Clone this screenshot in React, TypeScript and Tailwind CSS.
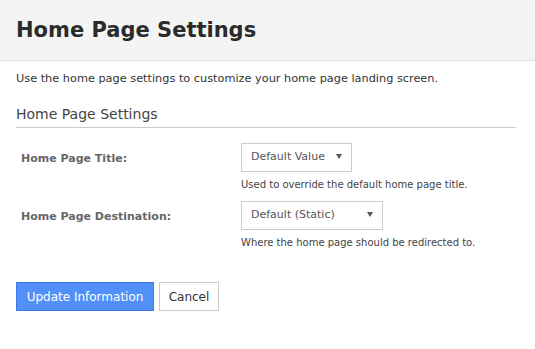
import React from "react";

const font = { fontFamily: '"DejaVu Sans", Verdana, sans-serif' };

const SelectBox: React.FC<{ value: string; width: string }> = ({ value, width }) => (
  <div
    className={`${width} h-[29px] border border-[#cccccc] bg-white flex items-center justify-between pl-[9px] pr-[9px] text-[11px] text-[#555]`}
  >
    <span>{value}</span>
    <svg width="6" height="5" viewBox="0 0 6 5" className="mb-[3px]">
      <path d="M0 0h6L3 5z" fill="#555" />
    </svg>
  </div>
);

export default function App() {
  return (
    <div className="w-[535px] h-[349px] bg-white text-[#333]" style={font}>
      {/* Header */}
      <div className="h-[61px] bg-[#f4f4f4] border-b border-[#e1e1e1] flex items-center px-4">
        <h1 className="text-[21px] font-bold text-[#2b2b2b] leading-none">
          Home Page Settings
        </h1>
      </div>

      <div className="px-4">
        <p className="text-[11.3px] mt-[11px] leading-[14px] text-[#333]">
          Use the home page settings to customize your home page landing screen.
        </p>

        <div className="mr-[3px] mt-[19px] border-b border-[#cccccc] pb-[4px]">
          <h2 className="text-[14px] text-[#444] leading-[18px]">Home Page Settings</h2>
        </div>

        <div className="mt-[15px] flex flex-col gap-[10px]">
          <div className="flex">
            <div className="w-[225px] pl-[5px] pt-[9px] text-[11px] leading-[14px] font-bold text-[#666]">
              Home Page Title:
            </div>
            <div>
              <SelectBox value="Default Value" width="w-[111px]" />
              <p className="text-[10px] leading-[13px] text-[#444] mt-[6px]">
                Used to override the default home page title.
              </p>
            </div>
          </div>
          <div className="flex">
            <div className="w-[225px] pl-[5px] pt-[9px] text-[11px] leading-[14px] font-bold text-[#666]">
              Home Page Destination:
            </div>
            <div>
              <SelectBox value="Default (Static)" width="w-[142px]" />
              <p className="text-[10px] leading-[13px] text-[#444] mt-[6px]">
                Where the home page should be redirected to.
              </p>
            </div>
          </div>
        </div>

        <div className="mt-[33px] flex gap-[5px]">
          <button className="h-[29px] w-[138px] bg-[#5090f8] border border-[#3b7ae6] text-white text-[12px]">
            Update Information
          </button>
          <button className="h-[29px] w-[60px] bg-white border border-[#cccccc] text-[#333] text-[12px]">
            Cancel
          </button>
        </div>
      </div>
    </div>
  );
}
